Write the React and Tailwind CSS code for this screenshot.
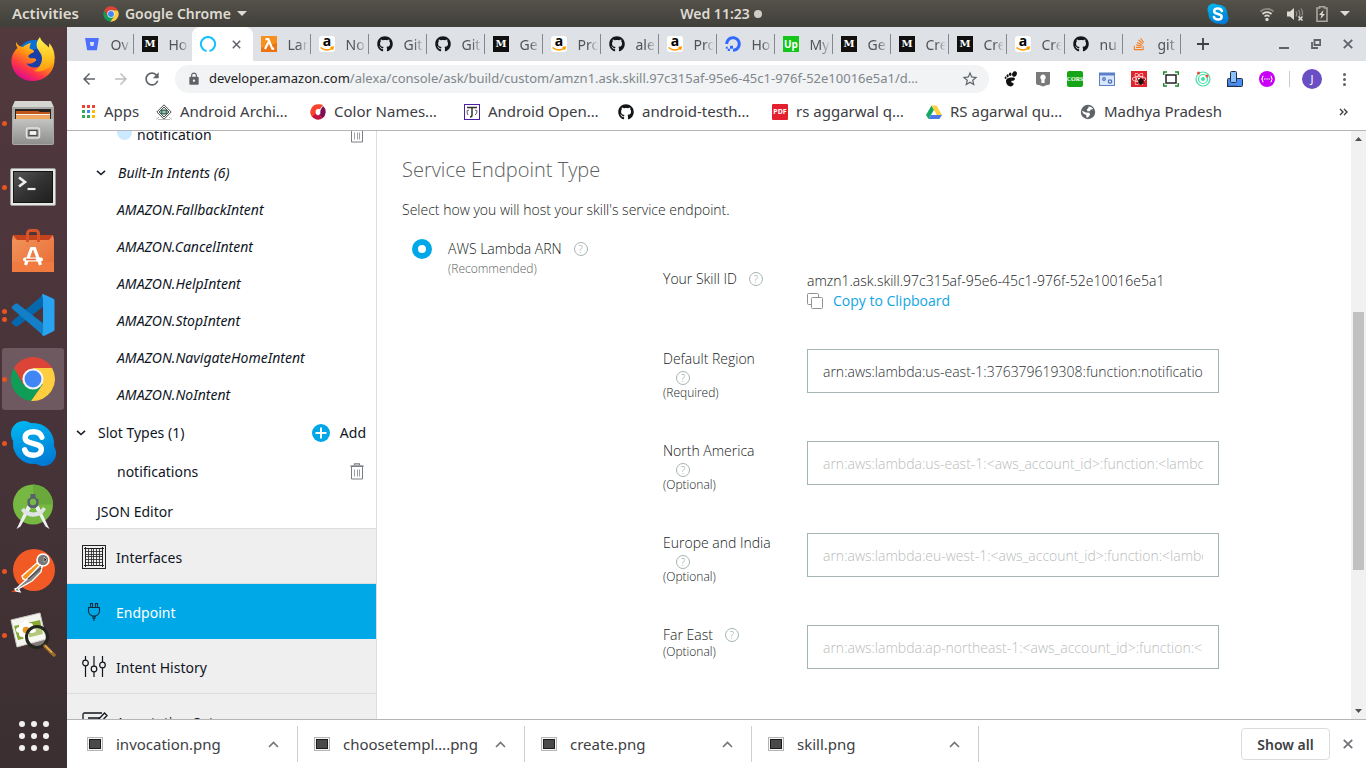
import React from "react";
import {
  FaBitbucket,
  FaGithub,
  FaDigitalOcean,
  FaStackOverflow,
  FaReact,
} from "react-icons/fa";
import { MdStarBorder, MdLock, MdRefresh, MdArrowBack, MdArrowForward } from "react-icons/md";

const UI = "font-['Noto_Sans','Open_Sans',sans-serif]";

/* ---------- shared logos ---------- */

function ChromeLogo({ size }) {
  return (
    <svg width={size} height={size} viewBox="0 0 48 48" aria-hidden="true">
      <path d="M4.1 12.5 A23 23 0 0 0 22 46.9 L34 29.7 L24 24 L14 29.7Z" fill="#0f9d58" />
      <path d="M22 46.900A23 23 0 0 0 43.9 12.5 L24 12.5 L34 29.7Z" fill="#ffcd40" />
      <path d="M4.1 12.5 A23 23 0 0 1 43.9 12.5 L24 12.5 L14 29.7Z" fill="#db4437" />
      <circle cx="24" cy="24" r="11" fill="#f4f4f4" />
      <circle cx="24" cy="24" r="8.8" fill="#4285f4" />
    </svg>
  );
}

function SkypeLogo({ size }) {
  return (
    <svg width={size} height={size} viewBox="0 0 48 48" aria-hidden="true">
      <defs>
        <linearGradient id={"sk" + size} gradientUnits="userSpaceOnUse" x1="14" y1="0" x2="30" y2="48">
          <stop offset="0" stopColor="#00b7f0" />
          <stop offset="1" stopColor="#0078d4" />
        </linearGradient>
      </defs>
      <g fill={"url(#sk" + size + ")"}>
        <circle cx="24" cy="24" r="21" />
        <circle cx="14" cy="14" r="13" />
        <circle cx="34" cy="34" r="13" />
      </g>
      <path
        d="M32.500 17.500c-1.400-4-5-5.500-8.500-5.500-5 0-8.500 2.300-8.500 6 0 8 16.500 4.300 16.500 11.800 0 4-3.500 6.200-8 6.200-4.300 0-7.800-1.700-9-5.500"
        fill="none"
        stroke="#fff"
        strokeWidth="5.500"
        strokeLinecap="round"
      />
    </svg>
  );
}

/* ---------- dock ---------- */

function Firefox() {
  return (
    <svg width="46" height="46" viewBox="0 0 46 46" aria-hidden="true">
      <defs>
        <linearGradient id="fx1" x1="0.8" y1="0" x2="0.2" y2="1">
          <stop offset="0" stopColor="#fff44f" />
          <stop offset="0.4" stopColor="#ff980e" />
          <stop offset="0.7" stopColor="#ff3647" />
          <stop offset="1" stopColor="#d300a0" />
        </linearGradient>
        <linearGradient id="fx2" x1="0.5" y1="0" x2="0.5" y2="1">
          <stop offset="0" stopColor="#fff44f" />
          <stop offset="0.6" stopColor="#ffc422" />
          <stop offset="1" stopColor="#ff980e" />
        </linearGradient>
      </defs>
      <circle cx="24" cy="21" r="17" fill="#0a6fd6" />
      <circle cx="27" cy="24" r="11" fill="#1a3fa8" />
      <path
        d="M6 7c0 2 .5 3.500 1.500 5C3 16 1 21 1.500 27c1 10.500 10 18 21 18C35 45 44.500 36 44.500 24c0-7-2.500-12-5-15 .5 3 .3 4-.5 6-1 9-4 14-11 16-5 1.500-10-.5-12-4 4 2 7 0 9-1.500 1.500-1 2-2 0-3-2-.6-4 .5-6-1-1.500-1.500 0-3 3-4.500l2-1c.5-1.500-2-3-4-3-1-1.500 0-4 1-6-3 .5-6 2-8 4-3-.3-5-1.500-7-5Z"
        fill="url(#fx1)"
      />
      <path
        d="M30 1c-4 5-4.500 9-1 14 4 5 4 10 0 16-1.500 2-3 3-5 4 9 2 19-3 20.500-13C45 14 41 9 39 7c.3 2 .3 3-.2 4.500C36 8 31 6 30 1Z"
        fill="url(#fx2)"
      />
    </svg>
  );
}

function Files() {
  return (
    <svg width="44" height="46" viewBox="0 0 44 46" aria-hidden="true">
      <defs>
        <linearGradient id="fl" x1="0" y1="0" x2="0" y2="1">
          <stop offset="0" stopColor="#c3c3c1" />
          <stop offset="1" stopColor="#8f8f8d" />
        </linearGradient>
      </defs>
      <path d="M4 1h36l3 6v36a2 2 0 0 1-2 2H3a2 2 0 0 1-2-2V7Z" fill="#a8a8a6" />
      <path d="M4 1h36l2.500 6h-41Z" fill="#d5d5d3" />
      <rect x="4" y="9" width="36" height="10" fill="#262422" />
      <path d="M5 11h22l2 1h10v7H5Z" fill="#c0561b" />
      <path d="M5 14h34v1.500H5Z" fill="#fff2df" />
      <path d="M5 16h34v3H5Z" fill="#f2a85d" />
      <path d="M2 19h40v24a1 1 0 0 1-1 1H3a1 1 0 0 1-1-1Z" fill="url(#fl)" />
      <rect x="15.500" y="28" width="13" height="10" rx="2" fill="none" stroke="#e3e3e1" strokeWidth="1.500" />
      <rect x="18" y="30.500" width="8" height="5" fill="#f4f4f4" stroke="#4a4a48" strokeWidth="1.200" />
    </svg>
  );
}

function Terminal() {
  return (
    <svg width="46" height="38" viewBox="0 0 46 38" aria-hidden="true">
      <defs>
        <linearGradient id="tm" x1="0" y1="0" x2="1" y2="1">
          <stop offset="0" stopColor="#575757" />
          <stop offset="0.500" stopColor="#333" />
          <stop offset="1" stopColor="#1e1e1e" />
        </linearGradient>
      </defs>
      <rect x="0.500" y="0.500" width="45" height="37" rx="1.500" fill="#e6e6e4" stroke="#9b9b99" />
      <rect x="3.500" y="3.500" width="39" height="31" fill="url(#tm)" stroke="#141414" />
      <path d="M9 9.500l6 4.500-6 4.500" fill="none" stroke="#eee" strokeWidth="2.600" />
      <path d="M17.500 21h8" stroke="#eee" strokeWidth="2.200" />
    </svg>
  );
}

function Software() {
  return (
    <svg width="42" height="44" viewBox="0 0 42 44" aria-hidden="true">
      <defs>
        <linearGradient id="sw" x1="0" y1="0" x2="1" y2="1">
          <stop offset="0" stopColor="#f0925a" />
          <stop offset="1" stopColor="#e96a33" />
        </linearGradient>
      </defs>
      <path d="M1 6h40l1 5H0Z" fill="#c2431c" />
      <path d="M1 6l4 5H0ZM41 6l-4 5h5Z" fill="#ec8452" />
      <rect y="11" width="42" height="32" fill="url(#sw)" />
      <rect y="33" width="42" height="10" fill="#f07a40" />
      <path d="M15.500 13V4.500a3 3 0 0 1 3-3h5a3 3 0 0 1 3 3V13" fill="none" stroke="#d9532a" strokeWidth="3" />
      <path d="M13.500 36l6-16.500h3l6 16.500" fill="none" stroke="#fff" strokeWidth="3.200" />
      <path d="M13 30.500h16" stroke="#fff" strokeWidth="4" strokeLinecap="round" />
      <path d="M14 30.500h10" stroke="#e8683a" strokeWidth="1.600" />
    </svg>
  );
}

function VSCode() {
  return (
    <svg width="44" height="44" viewBox="0 0 44 44" aria-hidden="true">
      <path d="M1 30.500L4 33c1 .6 2 .6 3 0l26-20V1L1.500 28c-1 1-1 1.800-.5 2.500Z" fill="#0668ac" />
      <path d="M1 13.500L4 11c1-.6 2-.6 3 0l26 20v12L1.500 16c-1-1-1-1.800-.5-2.500Z" fill="#127fc8" />
      <path d="M31 1.500L32 1l10 4.500c1 .5 1.500 1 1.500 2v29c0 1-.5 1.500-1.500 2L33 43l-2-1 1-3V6Z" fill="#27a3f0" />
    </svg>
  );
}

function AndroidStudio() {
  return (
    <svg width="44" height="46" viewBox="0 0 44 46" aria-hidden="true">
      <circle cx="22" cy="20.500" r="20" fill="#77b843" />
      <path d="M22 .5a20 20 0 0 1 20 20H22Z" fill="#6aa83c" />
      <path d="M17.500 19L7.500 41l-2 4 4-2.500L22 20ZM26.500 19l10 22 2 4-4-2.500L22 20Z" fill="#eef0f0" />
      <path d="M10 26c4 8 19 10 25-1l-3-2c-4 7-14 7-19 1Z" fill="#e0e3e4" />
      <path d="M19.500 10h5v3.500l3 2v6L24.500 24h-5l-3-2.500v-6l3-2Z" fill="#56616a" />
      <circle cx="22" cy="18" r="3.200" fill="#79b84a" />
    </svg>
  );
}

function Postman() {
  return (
    <svg width="46" height="46" viewBox="0 0 46 46" aria-hidden="true">
      <circle cx="24" cy="22" r="21" fill="#f15a24" />
      <path d="M1 44l6-4 4 4Z" fill="#e0481c" />
      <circle cx="33" cy="12" r="6" fill="#787878" stroke="#fff" strokeWidth="1.600" />
      <path d="M34 9l3 3-3 2Z" fill="#222" stroke="#ddd" strokeWidth="0.600" />
      <path d="M27 15L12 28l1 3 3 1 16-13Z" fill="#f7921e" stroke="#fff" strokeWidth="1.400" />
      <path d="M30 17L17 31l-10 9-2 .8 1 2.200 4 .8-1.500-3L22 33l9-9 1-6Z" fill="#858585" stroke="#fff" strokeWidth="1.300" />
      <path d="M31 20L18 31" stroke="#4f4f4f" strokeWidth="1.500" />
    </svg>
  );
}

function ImageViewer() {
  return (
    <svg width="46" height="46" viewBox="0 0 46 46" aria-hidden="true">
      <path d="M1 8L30 1l6 26-29 8Z" fill="#f5f5f0" stroke="#c9c9c2" />
      <path d="M4 14l26-6 3 14-25 6Z" fill="#8aab33" />
      <g fill="#fff">
        <ellipse cx="16" cy="12.500" rx="3" ry="4.500" />
        <ellipse cx="16" cy="23.500" rx="3" ry="4.500" />
        <ellipse cx="10.500" cy="18" rx="4.500" ry="3" />
        <ellipse cx="21.500" cy="18" rx="4.500" ry="3" />
        <ellipse cx="12" cy="14" rx="3" ry="3" />
        <ellipse cx="20" cy="14" rx="3" ry="3" />
        <ellipse cx="12" cy="22" rx="3" ry="3" />
      </g>
      <circle cx="16" cy="18" r="3.300" fill="#e99b20" />
      <circle cx="27" cy="25" r="10.500" fill="#fff" fillOpacity="0.350" stroke="#23271f" strokeWidth="3" />
      <path d="M35 34l9 9" stroke="#9a6a2b" strokeWidth="3.500" strokeLinecap="round" />
      <path d="M35 33.500l7 7" stroke="#f0b45a" strokeWidth="1.200" />
    </svg>
  );
}

const dockItems = [
  { name: "Firefox", icon: <Firefox />, dots: 0 },
  { name: "Files", icon: <Files />, dots: 1 },
  { name: "Terminal", icon: <Terminal />, dots: 1 },
  { name: "Ubuntu Software", icon: <Software />, dots: 0 },
  { name: "Visual Studio Code", icon: <VSCode />, dots: 2 },
  { name: "Google Chrome", icon: <ChromeLogo size={46} />, dots: 1, active: true },
  { name: "Skype", icon: <SkypeLogo size={47} />, dots: 1 },
  { name: "Android Studio", icon: <AndroidStudio />, dots: 0 },
  { name: "Postman", icon: <Postman />, dots: 1 },
  { name: "Image Viewer", icon: <ImageViewer />, dots: 1 },
];

function Dock() {
  return (
    <nav
      aria-label="Dock"
      className="flex w-[67px] shrink-0 flex-col justify-between bg-linear-to-b from-[#52393e] via-[#48343a] to-[#3b2f31] pt-px pb-[13px]"
    >
      <ul className="flex flex-col gap-[2px]">
        {dockItems.map((d) => (
          <li key={d.name} className="flex h-[62px] pl-[2px]">
            <button
              aria-label={d.name}
              className={
                "relative flex w-[62px] items-center justify-center rounded-[3px] " +
                (d.active ? "bg-[#6d595f]" : "")
              }
            >
              <span className="absolute left-0 flex flex-col gap-[3px]">
                {Array.from({ length: d.dots }, (_, i) => (
                  <span key={i} className="size-[5px] rounded-full bg-[#e95420]" />
                ))}
              </span>
              {d.icon}
            </button>
          </li>
        ))}
      </ul>
      <button aria-label="Show applications" className="grid grid-cols-3 gap-[6px] self-center p-1">
        {Array.from({ length: 9 }, (_, i) => (
          <span key={i} className="size-[6px] rounded-full bg-[#f2f0f0]" />
        ))}
      </button>
    </nav>
  );
}

/* ---------- desktop top bar ---------- */

function TopBar() {
  return (
    <header className="grid h-[27px] shrink-0 grid-cols-3 items-center bg-linear-to-b from-[#55524a] to-[#403f3a] pr-4 pl-3 text-[14px] font-semibold text-[#dfdbd2]">
      <div className="flex items-center gap-6">
        <button className="text-[15px]">Activities</button>
        <button className="flex items-center gap-[6px]">
          <ChromeLogo size={16} />
          <span>Google Chrome</span>
          <svg width="10" height="5" viewBox="0 0 10 5" aria-hidden="true">
            <path d="M0 0h10L5 5Z" fill="#dfdbd2" />
          </svg>
        </button>
      </div>
      <button className="flex items-center gap-1 justify-self-center pl-20">
        Wed 11:23
        <span className="size-2 rounded-full bg-[#d0ccc4]" />
      </button>
      <div className="flex items-center justify-end">
        <SkypeLogo size={22} />
        <svg className="ml-[30px]" width="16" height="16" viewBox="0 0 16 16" aria-hidden="true" fill="none">
          <path d="M1.500 5.500a9.500 9.500 0 0 1 13 0" stroke="#8d8a83" strokeWidth="1.800" />
          <path d="M3.500 8a6.500 6.500 0 0 1 9 0" stroke="#dfdbd2" strokeWidth="1.800" />
          <path d="M5.500 10.500a3.600 3.600 0 0 1 5 0" stroke="#dfdbd2" strokeWidth="1.600" />
          <circle cx="8" cy="13.500" r="1.700" fill="#dfdbd2" />
        </svg>
        <svg className="ml-3" width="17" height="16" viewBox="0 0 17 16" aria-hidden="true" fill="none">
          <path d="M0 5.500h3L7 2v12l-4-3.500H0Z" fill="#dfdbd2" />
          <path d="M9 5.500q1.500 2.500 0 5M11.500 4q2.500 4 .5 7M14 2.500q2.500 4 1 7" stroke="#8d8a83" strokeWidth="1.300" />
          <path d="M11.500 10.500l4 4m0-4l-4 4" stroke="#dfdbd2" strokeWidth="1.600" />
        </svg>
        <svg className="ml-3" width="12" height="16" viewBox="0 0 12 16" aria-hidden="true">
          <path d="M3.500 2V.8h5V2H11v13.200H1V2Z" fill="none" stroke="#a9a69e" strokeWidth="1.600" />
          <path d="M7.500 4L3 9h2.500L4.500 13 9 8H6.500Z" fill="#dfdbd2" />
        </svg>
        <svg className="ml-3" width="10" height="5" viewBox="0 0 10 5" aria-hidden="true">
          <path d="M0 0h10L5 5Z" fill="#dfdbd2" />
        </svg>
      </div>
    </header>
  );
}

/* ---------- browser tabs ---------- */

function Favicon({ kind }) {
  if (kind === "bitbucket") return <FaBitbucket className="size-[14px] text-[#4c6fff]" />;
  if (kind === "medium")
    return (
      <span className="flex size-4 items-center justify-center bg-[#12100e] font-['DejaVu_Serif',serif] text-[10px] leading-none font-bold text-white">
        M
      </span>
    );
  if (kind === "alexa")
    return (
      <svg className="size-4" viewBox="0 0 16 16" aria-hidden="true">
        <path d="M6.500 15A7.100 7.100 0 1 1 9.500 15" fill="none" stroke="#15c1ff" strokeWidth="2" />
      </svg>
    );
  if (kind === "lambda")
    return (
      <svg className="size-4" viewBox="0 0 16 16" aria-hidden="true">
        <path d="M0 0h16v16H0Z" fill="#ed7211" />
        <path d="M0 0h16v7L0 12Z" fill="#f7901e" />
        <path d="M4.500 3.200h2.800l4 9.500h1.900M7.400 6.300L4 13" fill="none" stroke="#fff" strokeWidth="2.200" />
      </svg>
    );
  if (kind === "amazon")
    return (
      <span className="relative flex size-4 items-start justify-center rounded-[3px] bg-white text-[14px] leading-[9px] font-bold text-black">
        a
        <svg className="absolute inset-0 size-4" viewBox="0 0 16 16" aria-hidden="true">
          <path d="M1.500 11.500Q7.500 16 13 12.300M11.500 11.500l2.700-.3-.7 2.500" fill="none" stroke="#ff9900" strokeWidth="1.500" />
        </svg>
      </span>
    );
  if (kind === "github") return <FaGithub className="size-4 text-[#14171a]" />;
  if (kind === "ocean") return <FaDigitalOcean className="size-4 text-[#2f68ff]" />;
  if (kind === "upwork")
    return (
      <span className="flex size-4 items-center justify-center bg-[#14c51c] text-[10px] leading-none font-bold text-white">
        Up
      </span>
    );
  return <FaStackOverflow className="size-[14px] text-[#f48024]" />;
}

const tabs = [
  ["bitbucket", "Ov"],
  ["medium", "Ho"],
  ["alexa", "", true],
  ["lambda", "Lar"],
  ["amazon", "No"],
  ["github", "Git"],
  ["github", "Git"],
  ["medium", "Ge"],
  ["amazon", "Pro"],
  ["github", "ale"],
  ["amazon", "Pro"],
  ["ocean", "Ho"],
  ["upwork", "My"],
  ["medium", "Ge"],
  ["medium", "Cre"],
  ["medium", "Cre"],
  ["amazon", "Cre"],
  ["github", "nu"],
  ["stack", "git"],
];

function TabStrip() {
  return (
    <div className="flex h-[34px] shrink-0 items-end bg-[#dee1e6] pl-[9px]">
      <div role="tablist" className="flex h-full items-end">
        {tabs.map(([kind, title, active], i) =>
          active ? (
            <div key={i} className="flex h-full w-[61px] items-center rounded-t-lg bg-white pl-2">
              <button role="tab" aria-selected="true" aria-label="Alexa console">
                <Favicon kind={kind} />
              </button>
              <button aria-label="Close tab" className="ml-4">
                <svg width="9" height="9" viewBox="0 0 9 9" aria-hidden="true">
                  <path d="M.8.8l7.400 7.400m0-7.400L.8 8.200" stroke="#5f6368" strokeWidth="1.500" />
                </svg>
              </button>
            </div>
          ) : (
            <button
              key={i}
              role="tab"
              aria-selected="false"
              className="flex h-full w-[58px] items-center justify-between pl-2"
            >
              <span className="flex w-4 justify-center">
                <Favicon kind={kind} />
              </span>
              <span className="ml-2 w-5 overflow-hidden text-left text-[14px] whitespace-nowrap text-[#505357] [mask-image:linear-gradient(to_right,black_50%,transparent)]">
                {title}
              </span>
              <span className={"h-5 w-px " + (i === 1 ? "bg-transparent" : "bg-[#85888d]")} />
            </button>
          )
        )}
      </div>
      <button aria-label="New tab" className="mb-[11px] ml-4">
        <svg width="12" height="12" viewBox="0 0 12 12" aria-hidden="true">
          <path d="M6 0v12M0 6h12" stroke="#3c4043" strokeWidth="1.800" />
        </svg>
      </button>
      <div className="mr-[13px] mb-3 ml-auto flex items-center gap-[22px] text-[#5f6368]">
        <button aria-label="Minimize" className="h-[11px]">
          <svg width="10" height="11" viewBox="0 0 10 11" aria-hidden="true">
            <path d="M0 10h10" stroke="currentColor" strokeWidth="2" />
          </svg>
        </button>
        <button aria-label="Restore">
          <svg width="10" height="10" viewBox="0 0 10 10" aria-hidden="true" fill="none" stroke="currentColor" strokeWidth="1.800">
            <path d="M3.500 1h5.700v5H3.500ZM1 3v6h6" />
          </svg>
        </button>
        <button aria-label="Close window">
          <svg width="10" height="10" viewBox="0 0 10 10" aria-hidden="true">
            <path d="M.8.8l8.400 8.400m0-8.400L.8 9.200" stroke="currentColor" strokeWidth="1.800" />
          </svg>
        </button>
      </div>
    </div>
  );
}

/* ---------- toolbar ---------- */

function Extensions() {
  return (
    <div className="flex items-center gap-4">
      <button aria-label="GNOME Shell integration">
        <svg className="size-4" viewBox="0 0 16 16" aria-hidden="true" fill="#111">
          <ellipse cx="11.500" cy="3" rx="2.300" ry="2.800" transform="rotate(20 11.500 3)" />
          <ellipse cx="7.200" cy="3.200" rx="1.300" ry="1.800" />
          <ellipse cx="4.600" cy="4.800" rx="1.100" ry="1.500" />
          <ellipse cx="2.600" cy="6.800" rx="0.900" ry="1.300" />
          <path d="M3 10c0-3 4-4 7.500-3.500 2.500.5 1.500 3-.5 3.200-1.500 0-2 .3-1.700 1.200.2 1 2 .2 2.300 1.600.3 2-2 3.300-4 2.800C4 14.800 3 12 3 10Z" />
        </svg>
      </button>
      <button aria-label="Password manager">
        <svg className="size-4" viewBox="0 0 16 16" aria-hidden="true">
          <path d="M1 1h14v11q0 2-3 2l-4 1.500L4 14q-3 0-3-2Z" fill="#7a7a7a" />
          <path d="M8 3.500a2.900 2.900 0 0 1 1.600 5.200V12H6.400V8.700A2.900 2.900 0 0 1 8 3.500Z" fill="#fff" />
        </svg>
      </button>
      <button
        aria-label="CORS toggle"
        className="flex size-4 items-center justify-center rounded-[2px] bg-[#16a516] font-['Liberation_Serif',serif] text-[6px] leading-none font-bold text-white"
      >
        CORS
      </button>
      <button aria-label="Window settings">
        <svg className="size-4" viewBox="0 0 16 16" aria-hidden="true">
          <rect x="0.500" y="2" width="15" height="12.500" fill="#d8e6fb" stroke="#5b80c8" />
          <path d="M0 2h16v2.500H0Z" fill="#5b80c8" />
          <circle cx="5" cy="8" r="1.300" fill="none" stroke="#4a6fb8" strokeWidth="1.200" />
          <circle cx="11" cy="10.500" r="1.700" fill="none" stroke="#4a6fb8" strokeWidth="1.200" />
        </svg>
      </button>
      <button aria-label="React debug tools" className="relative flex size-4 items-center justify-center bg-[#e3222b] text-white">
        <FaReact className="size-[14px]" />
        <svg className="absolute inset-0 size-4" viewBox="0 0 16 16" aria-hidden="true" stroke="#2a0d0d">
          <ellipse cx="10" cy="10.500" rx="2.200" ry="2.800" fill="#2a0d0d" />
          <path d="M6.500 8.500l7 4M6.500 12.500l7-4M10 7v7" strokeWidth="0.900" />
        </svg>
      </button>
      <button aria-label="Full page capture">
        <svg className="size-4" viewBox="0 0 16 16" aria-hidden="true" fill="none">
          <rect x="3" y="4" width="10" height="8" stroke="#222" strokeWidth="1.500" />
          <path d="M.7 4V1H4M12 1h3.300v3M15.300 12v3H12M4 15H.7v-3" stroke="#1d8a2b" strokeWidth="1.500" />
        </svg>
      </button>
      <button aria-label="Orbit">
        <svg className="size-4" viewBox="0 0 16 16" aria-hidden="true" fill="none">
          <circle cx="8" cy="8" r="7" stroke="#3fe0a2" strokeWidth="1.200" />
          <circle cx="8" cy="8" r="4.500" stroke="#3fe0a2" strokeWidth="1.200" />
          <circle cx="8" cy="8" r="2" fill="#3fe0a2" />
          <circle cx="3.500" cy="2" r="1.500" fill="#ef4b3a" />
          <circle cx="12" cy="5" r="1.500" fill="#ef4b3a" />
        </svg>
      </button>
      <button aria-label="Device preview">
        <svg className="size-4" viewBox="0 0 16 16" aria-hidden="true" stroke="#22324a">
          <rect x="0.500" y="7.500" width="15" height="8" rx="1" fill="#4b8df0" />
          <rect x="3.500" y="0.500" width="6" height="11" rx="1" fill="#8cc0fa" />
          <path d="M.5 12v3.500h10" fill="none" strokeWidth="1.500" />
        </svg>
      </button>
      <button aria-label="JSON viewer">
        <svg className="size-4" viewBox="0 0 16 16" aria-hidden="true">
          <circle cx="8" cy="8" r="8" fill="#c800f5" />
          <path d="M4.500 5Q3.500 5 3.500 6.500T2.300 8Q3.500 8 3.500 9.500T4.500 11M11.500 5q1 0 1 1.500T13.700 8q-1.200 0-1.200 1.500T11.500 11" fill="none" stroke="#fff" strokeWidth="1.100" />
          <path d="M5 8h1.500M7.300 8h1.500M9.500 8h1.500" stroke="#fff" strokeWidth="1.200" />
        </svg>
      </button>
    </div>
  );
}

function Toolbar() {
  return (
    <div className="flex h-[36px] shrink-0 items-center bg-white pr-5 pl-[13px] text-[#5f6368]">
      <button aria-label="Back">
        <MdArrowBack className="size-[18px]" />
      </button>
      <button aria-label="Forward" className="ml-[14px] text-[#bcbec1]">
        <MdArrowForward className="size-[18px]" />
      </button>
      <button aria-label="Reload" className="ml-3">
        <MdRefresh className="size-5" />
      </button>
      <div className="ml-[13px] flex h-7 min-w-0 flex-1 items-center rounded-full bg-[#f1f3f4] pr-[10px] pl-3">
        <MdLock className="size-[14px] shrink-0" />
        <button
          aria-label="Address bar"
          className="ml-2 min-w-0 flex-1 truncate text-left text-[13px] text-[#80868b]"
        >
          <span className="text-[#202124]">developer.amazon.com</span>
          /alexa/console/ask/build/custom/amzn1.ask.skill.97c315af-95e6-45c1-976f-52e10016e5a1/d…
        </button>
        <button aria-label="Bookmark this page" className="ml-1">
          <MdStarBorder className="size-[18px]" />
        </button>
      </div>
      <div className="ml-[14px]">
        <Extensions />
      </div>
      <span className="ml-[14px] h-4 w-px bg-[#c9cbce]" />
      <button
        aria-label="Profile"
        className="ml-3 flex size-5 items-center justify-center rounded-full bg-[#6a4fc4] text-[11px] text-white"
      >
        J
      </button>
      <button aria-label="Browser menu" className="ml-[21px] flex flex-col gap-[2px]">
        <span className="size-[3px] rounded-full bg-current" />
        <span className="size-[3px] rounded-full bg-current" />
        <span className="size-[3px] rounded-full bg-current" />
      </button>
    </div>
  );
}

/* ---------- bookmarks ---------- */

function BookmarkIcon({ kind }) {
  if (kind === "apps") {
    const c = ["bg-[#ea4335]", "bg-[#ea4335]", "bg-[#ea4335]", "bg-[#34a853]", "bg-[#4285f4]", "bg-[#fbbc05]", "bg-[#34a853]", "bg-[#34a853]", "bg-[#fbbc05]"];
    return (
      <span className="grid grid-cols-3 gap-[2px]">
        {c.map((x, i) => (
          <span key={i} className={"size-[3px] " + x} />
        ))}
      </span>
    );
  }
  if (kind === "arch")
    return (
      <svg className="size-4" viewBox="0 0 16 16" aria-hidden="true">
        <path d="M8 .8L15.200 8 8 15.200.8 8Z" fill="#fff" stroke="#4a4a4a" strokeWidth="1" />
        <path d="M8 3L13 8 8 13 3 8Z" fill="#dfe9e2" stroke="#555" strokeWidth="1" />
        <path d="M5 6h6v4H5Z" fill="#4c8a66" stroke="#355" strokeWidth="0.800" />
        <path d="M6.500 8h3" stroke="#fff" />
        <path d="M0 15.500l3-2.500M16 15.500l-3-2.500M2 15.500h12" stroke="#bbb" />
      </svg>
    );
  if (kind === "color")
    return (
      <svg className="size-4" viewBox="0 0 16 16" aria-hidden="true">
        <path d="M8 .3A7.700 7.700 0 0 0 1.500 12L6 9.500V6l4-1 3-4A7.700 7.700 0 0 0 8 .3Z" fill="#f8432f" />
        <path d="M13 2.100A7.700 7.700 0 0 1 12.500 14.200L9 10.500 10.500 6Z" fill="#7a0f54" />
        <path d="M1.500 12a7.700 7.700 0 0 0 11 2.200L9 9.500 5.500 9Z" fill="#c4123f" />
        <path d="M.3 8l5 2.500L1.800 12.500Z" fill="#f8432f" />
        <path d="M8 4.800l2.300 1.500V10L8 11.500 5.700 10V6.300Z" fill="#fff" />
      </svg>
    );
  if (kind === "open")
    return (
      <svg className="size-4" viewBox="0 0 16 16" aria-hidden="true" fill="none">
        <rect x="0.500" y="0.500" width="15" height="15" stroke="#4a1fa0" />
        <path d="M3 3.500h10M8 3v8q0 2-2 2" stroke="#333" strokeWidth="1.500" />
        <path d="M5 6q-2.500 0-2 2t1 3M11 6q2.500 0 2 2t-2 3" stroke="#555" />
      </svg>
    );
  if (kind === "github") return <FaGithub className="size-4 text-[#14171a]" />;
  if (kind === "pdf")
    return (
      <span className="flex size-4 items-center justify-center rounded-[1px] bg-[#e5202e] text-[7px] leading-none font-bold text-white">
        PDF
      </span>
    );
  if (kind === "drive")
    return (
      <svg className="size-4" viewBox="0 0 16 16" aria-hidden="true">
        <path d="M5.500 1.500L0 11l2.600 4L8 5.800Z" fill="#11a861" />
        <path d="M5.500 1.500h5L16 11h-5.300Z" fill="#ffcf40" />
        <path d="M5 11h11l-2.600 4H2.600Z" fill="#4a77e8" />
      </svg>
    );
  return (
    <svg className="size-4" viewBox="0 0 16 16" aria-hidden="true">
      <circle cx="8" cy="8" r="7.200" fill="#5f6368" />
      <path d="M8.500 2.500c2 0 3.700 1 4.700 2.500l-2.700.8-.7 1.400H7.500L6.800 5.500 8.500 4ZM2.400 6.800l3.300 1.700 3.800.3.500 2-2 2.800-1.500-.2-.3-2.400-2.400-1L2.300 8Z" fill="#fff" />
    </svg>
  );
}

const bookmarks = [
  ["apps", "Apps", "w-[76px]"],
  ["arch", "Android Archi…", "w-[154px]"],
  ["color", "Color Names…", "w-[154px]"],
  ["open", "Android Open…", "w-[154px]"],
  ["github", "android-testh…", "w-[154px]"],
  ["pdf", "rs aggarwal q…", "w-[154px]"],
  ["drive", "RS agarwal qu…", "w-[154px]"],
  ["globe", "Madhya Pradesh", "w-[160px]"],
];

function Bookmarks() {
  return (
    <div className="flex h-[34px] shrink-0 items-center border-b border-[#b6b4b6] bg-white pr-[18px] pl-[13px] pb-1 text-[15px] text-[#3c4043]">
      {bookmarks.map(([kind, label, w]) => (
        <a key={label} href="#" className={"flex items-center gap-2 whitespace-nowrap " + w}>
          <span className="flex w-4 shrink-0 justify-center">
            <BookmarkIcon kind={kind} />
          </span>
          {label}
        </a>
      ))}
      <button aria-label="More bookmarks" className="ml-auto">
        <svg width="9" height="8" viewBox="0 0 9 8" aria-hidden="true">
          <path d="M1 1l3 3-3 3M5 1l3 3-3 3" fill="none" stroke="#3c4043" strokeWidth="1.400" />
        </svg>
      </button>
    </div>
  );
}

/* ---------- skill sidebar ---------- */

function Trash() {
  return (
    <svg width="14" height="17" viewBox="0 0 14 17" aria-hidden="true" fill="none" stroke="#7a7e86">
      <path d="M4.500 2V.8h5V2M.5 3.500h13" strokeWidth="1.200" />
      <path d="M.5 2.500h13" stroke="#a5a7ac" />
      <path d="M1.500 4v12h11V4" />
      <path d="M4.500 6.500v7M7.500 6.500v7M9.500 6.500v7" stroke="#9a9da3" />
    </svg>
  );
}

function Chevron() {
  return (
    <svg width="10" height="6" viewBox="0 0 10 6" aria-hidden="true">
      <path d="M1 .8l4 3.700L9 .8" fill="none" stroke="#1a1f2b" strokeWidth="1.600" />
    </svg>
  );
}

function InterfacesIcon() {
  return (
    <svg width="24" height="24" viewBox="0 0 24 24" aria-hidden="true" fill="none" stroke="#222">
      <rect x="0.500" y="0.500" width="23" height="23" />
      <path d="M3.500 2v20M20.500 2v20M2 3.500h20M2 20.500h20" />
      <path d="M6.500 3v18M9.500 3v18M11.500 3v18M14.500 3v18M17.500 3v18M3 6.500h18M3 9.500h18M3 11.500h18M3 14.500h18M3 17.500h18" strokeWidth="0.800" />
    </svg>
  );
}

function PlugIcon() {
  return (
    <svg width="24" height="24" viewBox="0 0 24 24" aria-hidden="true" fill="none" stroke="#10303f" strokeWidth="1.100">
      <path d="M8.500 7V3.500h2V7M13.500 7V3.500h2V7M6.500 7.500h11v3.500a5.500 5 0 0 1-11 0ZM10.500 16.500h3l-.8 2h-1.400ZM12 18.500v2.500" />
    </svg>
  );
}

function SlidersIcon() {
  return (
    <svg width="24" height="24" viewBox="0 0 24 24" aria-hidden="true" fill="none" stroke="#10151c" strokeWidth="1.200">
      <path d="M3.500 1v4M3.500 11v11M12 1v10M12 17v5M20.500 1v6M20.500 13v9" />
      <circle cx="3.500" cy="8" r="2.800" />
      <circle cx="12" cy="14" r="2.800" />
      <circle cx="20.500" cy="10" r="2.800" />
    </svg>
  );
}

function AnnotationIcon() {
  return (
    <svg width="26" height="24" viewBox="0 0 26 24" aria-hidden="true" fill="none" stroke="#10151c" strokeWidth="1.300">
      <path d="M20 3H2.500Q1 3 1 4.500V21h20v-8M6 8h12M6 12h8" />
      <path d="M25 5.500l-7.500 8-3.500 1 1-3.500L22.500 3Z" />
    </svg>
  );
}

const builtIns = ["FallbackIntent", "CancelIntent", "HelpIntent", "StopIntent", "NavigateHomeIntent", "NoIntent"];

const sections = [
  { label: "Interfaces", icon: <InterfacesIcon /> },
  { label: "Endpoint", icon: <PlugIcon />, active: true },
  { label: "Intent History", icon: <SlidersIcon /> },
  { label: "Annotation Sets", icon: <AnnotationIcon /> },
];

function SkillSidebar() {
  return (
    <aside className="flex w-[310px] shrink-0 flex-col overflow-hidden border-r border-[#dcdddd] bg-white text-[14px] text-[#10161f]">
      <div className="-mt-[17px] flex h-10 shrink-0 items-center pr-3 pl-[50px]">
        <span className="mb-1 size-[15px] rounded-full bg-[#cce9ff]" />
        <a href="#" className="ml-[5px]">notification</a>
        <button aria-label="Delete notification" className="ml-auto">
          <Trash />
        </button>
      </div>
      <button className="flex h-[37px] shrink-0 items-center gap-3 pl-[29px] italic">
        <Chevron />
        Built-In Intents (6)
      </button>
      <ul className="shrink-0 italic">
        {builtIns.map((n) => (
          <li key={n} className="flex h-[37px] items-center pl-[50px]">
            <a href="#">AMAZON.{n}</a>
          </li>
        ))}
      </ul>
      <div className="flex h-[39px] shrink-0 items-center pr-[10px] pl-[9px]">
        <button className="flex items-center gap-3">
          <Chevron />
          Slot Types (1)
        </button>
        <button className="ml-auto flex items-center gap-[10px]">
          <svg width="18" height="18" viewBox="0 0 18 18" aria-hidden="true">
            <circle cx="9" cy="9" r="9" fill="#00a7e7" />
            <path d="M9 3.500v11M3.500 9h11" stroke="#fff" strokeWidth="2" />
          </svg>
          Add
        </button>
      </div>
      <div className="flex h-[38px] shrink-0 items-center justify-between pr-3 pl-[50px]">
        <a href="#">notifications</a>
        <button aria-label="Delete notifications">
          <Trash />
        </button>
      </div>
      <a href="#" className="flex h-[38px] shrink-0 items-center pt-1 pl-[30px]">
        JSON Editor
      </a>
      <div className="shrink-0 border-t border-[#dcdddd]">
        {sections.map((s) => (
          <a
            key={s.label}
            href="#"
            className={
              "flex h-[55px] items-center border-b pt-[2px] pl-[15px] " +
              (s.active ? "border-[#00a8e8] bg-[#00a8e8] text-white" : "border-[#dcdddd] bg-[#efefef]")
            }
          >
            <span className="w-[34px]">{s.icon}</span>
            {s.label}
          </a>
        ))}
      </div>
    </aside>
  );
}

/* ---------- endpoint form ---------- */

function Help({ label }) {
  return (
    <button
      type="button"
      aria-label={"Help: " + label}
      className="flex size-[14px] shrink-0 items-center justify-center rounded-full border border-[#a5b4b4] text-[10px] leading-none text-[#8a9a9a]"
    >
      ?
    </button>
  );
}

const regions = [
  { id: "default", label: "Default Region", note: "(Required)", wrap: true, value: "arn:aws:lambda:us-east-1:376379619308:function:notification" },
  { id: "na", label: "North America", note: "(Optional)", wrap: true, hint: "arn:aws:lambda:us-east-1:<aws_account_id>:function:<lambda_name>" },
  { id: "eu", label: "Europe and India", note: "(Optional)", wrap: true, hint: "arn:aws:lambda:eu-west-1:<aws_account_id>:function:<lambda_name>" },
  { id: "fe", label: "Far East", note: "(Optional)", hint: "arn:aws:lambda:ap-northeast-1:<aws_account_id>:function:<lambda_name>" },
];

function EndpointForm() {
  return (
    <main className="min-w-0 flex-1 overflow-hidden bg-white pt-[25px] pl-[25px] font-['Open_Sans','Noto_Sans',sans-serif] text-[14px] font-light text-[#161b22]">
      <h1 className="text-[20px] leading-7 text-[#5c5f62]">Service Endpoint Type</h1>
      <p className="mt-4 leading-5">Select how you will host your skill's service endpoint.</p>
      <div className="mt-[19px] flex">
        <div className="flex w-[261px] shrink-0 items-start pl-[10px]">
          <input
            id="lambda"
            type="radio"
            name="endpoint"
            defaultChecked
            className="size-5 shrink-0 appearance-none rounded-full border-[6px] border-[#00a8e8] bg-white"
          />
          <div className="ml-4">
            <div className="flex items-center gap-3 leading-5">
              <label htmlFor="lambda">AWS Lambda ARN</label>
              <Help label="AWS Lambda ARN" />
            </div>
            <div className="text-[12px] leading-5 text-[#5c5f62]">(Recommended)</div>
          </div>
        </div>
        <div className="flex flex-col pt-[30px]">
          <div className="flex h-20">
            <div className="flex w-36 items-start gap-3 leading-5">
              Your Skill ID
              <span className="flex h-5 items-center">
                <Help label="Your Skill ID" />
              </span>
            </div>
            <div className="pt-[2px] leading-5">
              <div>amzn1.ask.skill.97c315af-95e6-45c1-976f-52e10016e5a1</div>
              <button type="button" className="flex items-center gap-[10px] font-medium text-[#0fa5e4]">
                <svg width="16" height="16" viewBox="0 0 16 16" aria-hidden="true" fill="none" stroke="#8f9294">
                  <path d="M4 11.500H1.500q-1 0-1-1v-9q0-1 1-1h9q1 0 1 1V4" />
                  <rect x="4.500" y="4.500" width="11" height="11" rx="1" fill="#fff" />
                </svg>
                Copy to Clipboard
              </button>
            </div>
          </div>
          <div className="flex flex-col gap-12">
            {regions.map((r) => (
              <div key={r.id} className="flex h-11">
                <div className="w-36">
                  <div className={r.wrap ? "" : "flex items-center gap-3"}>
                    <label htmlFor={r.id} className="block leading-5">{r.label}</label>
                    <div className={r.wrap ? "flex h-[17px] items-center pl-[13px]" : ""}>
                      <Help label={r.label} />
                    </div>
                  </div>
                  <div className="text-[12px] leading-[14px]">{r.note}</div>
                </div>
                <input
                  id={r.id}
                  type="text"
                  defaultValue={r.value}
                  placeholder={r.hint}
                  className="h-11 w-[412px] border border-[#a5b4b4] bg-white px-[15px] text-[14px] text-[#2c3033] placeholder:text-[#b9bcbc]"
                />
              </div>
            ))}
          </div>
        </div>
      </div>
    </main>
  );
}

function ScrollBar() {
  return (
    <div className="flex w-[15px] shrink-0 flex-col items-center bg-[#f1f1f1] py-[6px]" aria-hidden="true">
      <svg width="7" height="4" viewBox="0 0 7 4">
        <path d="M0 4h7L3.500 0Z" fill="#505050" />
      </svg>
      <div className="mt-[171px] h-[258px] w-[11px] bg-[#c1c1c1]" />
      <svg className="mt-auto" width="7" height="4" viewBox="0 0 7 4">
        <path d="M0 0h7L3.500 4Z" fill="#505050" />
      </svg>
    </div>
  );
}

/* ---------- downloads ---------- */

const downloads = ["invocation.png", "choosetempl….png", "create.png", "skill.png"];

function Downloads() {
  return (
    <footer className="flex h-[49px] shrink-0 items-center border-t border-[#b6b4b6] bg-white pl-1">
      {downloads.map((d) => (
        <div key={d} className="flex h-9 w-[227px] items-center border-r border-[#cfcfcf] pr-[18px] pl-4">
          <svg width="16" height="14" viewBox="0 0 16 14" aria-hidden="true">
            <rect x="0.500" y="0.500" width="15" height="13" fill="#f4f4f4" stroke="#b5b5b5" />
            <rect x="2.500" y="2.500" width="11" height="9" fill="#4a4a4a" stroke="#1d1d1d" />
          </svg>
          <a href="#" className="ml-[13px] text-[15px] text-[#3c4043]">{d}</a>
          <button aria-label={"Options for " + d} className="ml-auto">
            <svg width="11" height="7" viewBox="0 0 11 7" aria-hidden="true">
              <path d="M1 6l4.500-4.500L10 6" fill="none" stroke="#70757a" strokeWidth="1.600" />
            </svg>
          </button>
        </div>
      ))}
      <button className="ml-auto h-8 w-[89px] rounded-[4px] border border-[#dadce0] text-[14px] font-semibold text-[#3c4043]">
        Show all
      </button>
      <button aria-label="Close downloads bar" className="mr-[13px] ml-[13px]">
        <svg width="10" height="10" viewBox="0 0 10 10" aria-hidden="true">
          <path d="M.8.8l8.400 8.400m0-8.400L.8 9.200" stroke="#70757a" strokeWidth="1.800" />
        </svg>
      </button>
    </footer>
  );
}

export default function App() {
  return (
    <div className={"flex h-screen flex-col overflow-hidden " + UI}>
      <TopBar />
      <div className="flex min-h-0 flex-1">
        <Dock />
        <div className="flex min-w-0 flex-1 flex-col bg-white">
          <TabStrip />
          <Toolbar />
          <Bookmarks />
          <div className="flex min-h-0 flex-1">
            <SkillSidebar />
            <EndpointForm />
            <ScrollBar />
          </div>
          <Downloads />
        </div>
      </div>
    </div>
  );
}
